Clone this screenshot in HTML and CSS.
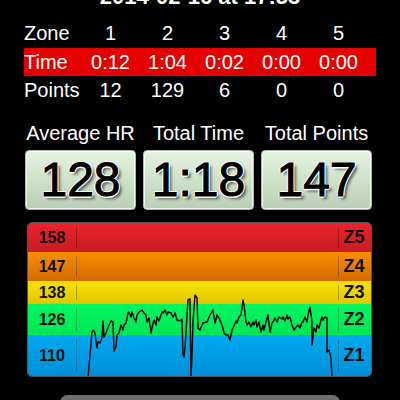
FILE: index.html
```html
<!DOCTYPE html>
<html lang="en">
<head>
    <meta charset="UTF-8">
    <meta name="viewport" content="width=device-width, initial-scale=1.0">
    <title>Workout Summary</title>
    <link rel="stylesheet" href="styles.css">
</head>
<body>
    <div class="screen">
        <div class="title">2014-02-16 at 17:53</div>

        <div class="zones">
            <div class="zone-row">
                <span class="label">Zone</span>
                <span>1</span><span>2</span><span>3</span><span>4</span><span>5</span>
            </div>
            <div class="zone-row time">
                <span class="label">Time</span>
                <span>0:12</span><span>1:04</span><span>0:02</span><span>0:00</span><span>0:00</span>
            </div>
            <div class="zone-row">
                <span class="label">Points</span>
                <span>12</span><span>129</span><span>6</span><span>0</span><span>0</span>
            </div>
        </div>

        <div class="stats">
            <div class="stat">
                <div class="stat-label">Average HR</div>
                <div class="stat-box">128</div>
            </div>
            <div class="stat">
                <div class="stat-label">Total Time</div>
                <div class="stat-box">1:18</div>
            </div>
            <div class="stat">
                <div class="stat-label">Total Points</div>
                <div class="stat-box">147</div>
            </div>
        </div>

        <div class="chart">
            <div class="band z5"><span class="hr">158</span><span class="plot"></span><span class="zn">Z5</span></div>
            <div class="band z4"><span class="hr">147</span><span class="plot"></span><span class="zn">Z4</span></div>
            <div class="band z3"><span class="hr">138</span><span class="plot"></span><span class="zn">Z3</span></div>
            <div class="band z2"><span class="hr">126</span><span class="plot"></span><span class="zn">Z2</span></div>
            <div class="band z1"><span class="hr">110</span><span class="plot"></span><span class="zn">Z1</span></div>
            <svg class="trace" viewBox="27 222 345 155" preserveAspectRatio="none">
                <polyline fill="none" stroke="#000" stroke-width="1.4" stroke-linejoin="round" points="
                    88,378 92,332 93,330 95,333 97,348 98,342 100,343 102,338 103,321 104,337 106,333 107,330
                    109,325 111,321 113,322 114,351 116,347 117,335 119,333 121,325 123,330 124,325 126,323
                    128,313 129,312 131,317 132,312 134,318 136,322 137,315 139,312 142,310 144,313 146,315
                    147,322 149,318 151,333 153,323 154,320 156,325 157,317 159,321 162,312 163,313 165,310
                    167,315 168,312 171,313 173,317 175,313 177,320 179,321 182,319 183,355 184,357 185,348
                    187,315 188,300 190,299 191,378 192,355 193,322 195,295 197,298 198,328 200,330
                    203,323 207,322 210,315 213,310 215,323 217,315 219,318 222,325 224,333 226,335 228,335
                    230,340 232,330 233,328 236,321 237,323 239,317 241,315 243,300 244,305 246,322 247,325
                    249,322 251,327 253,322 254,325 256,320 257,327 259,322 261,332 263,325 264,330 266,322
                    268,315 270,332 272,323 273,322 275,318 277,322 279,317 282,319 283,317 285,321 287,315
                    288,319 290,317 292,325 294,330 296,327 298,325 300,328 302,322 303,322 305,317 307,322
                    308,315 310,307 312,322 312,345 314,328 316,332 317,325 319,328 321,320 322,317 323,320
                    325,317 327,318 327,352 329,350 331,358 332,378"/>
            </svg>
        </div>

        <div class="button"></div>
    </div>
</body>
</html>
```

FILE: styles.css
```css
body {
    margin: 0;
    background-color: #000;
    color: #fff;
    font-family: "Liberation Sans", Arial, sans-serif;
}

.screen {
    width: 400px;
    height: 400px;
    overflow: hidden;
}

.title {
    margin: -15px 0 10px;
    font-size: 22px;
    font-weight: bold;
    line-height: 24px;
    text-align: center;
}

/* zone table */
.zones {
    width: 352px;
    margin-left: 24px;
    font-size: 20px;
}
.zone-row {
    display: grid;
    grid-template-columns: 58px repeat(5, 57px);
    align-items: center;
    height: 29px;
}
.zone-row span {
    text-align: center;
}
.zone-row .label {
    text-align: left;
}
.zone-row.time {
    height: 28px;
    background-color: #e40000;
}

/* totals */
.stats {
    display: grid;
    grid-template-columns: repeat(3, 111px);
    column-gap: 7px;
    margin: 16px 0 0 25px;
}
.stat-label {
    font-size: 20px;
    line-height: 24px;
    text-align: center;
    white-space: nowrap;
    margin-bottom: 5px;
}
.stat-box {
    height: 58px;
    border: 1px solid #b4b4b4;
    border-radius: 4px;
    box-shadow: inset 0 0 0 1px rgba(255, 255, 255, 0.7);
    background: linear-gradient(#e6f3e2, #c9dec5 60%, #b9ceb5);
    color: #000;
    font-size: 48px;
    line-height: 58px;
    text-align: center;
    -webkit-text-stroke: 1px #000;
    text-shadow: 1.5px 0 #fff, -1.5px 0 #fff, 0 1.5px #fff, 0 -1.5px #fff,
                 1px 1px #fff, -1px -1px #fff, 1px -1px #fff, -1px 1px #fff,
                 3px 3px 3px rgba(0, 0, 0, 0.6);
}

/* heart rate chart */
.chart {
    position: relative;
    width: 343px;
    margin: 12px 0 0 27px;
    border: 1px solid #555;
    border-radius: 5px;
    overflow: hidden;
}
.band {
    display: flex;
    align-items: stretch;
    color: #111;
    font-size: 16px;
    font-weight: bold;
}
.band .hr {
    width: 48px;
    display: flex;
    align-items: center;
    justify-content: center;
}
.band .plot {
    flex: 1;
    margin: 4px 0;
    border-left: 1px solid rgba(0, 0, 0, 0.25);
    border-right: 1px solid rgba(0, 0, 0, 0.25);
}
.band .zn {
    width: 30px;
    display: flex;
    align-items: center;
    justify-content: center;
    padding-right: 2px;
    font-size: 18px;
}
.z5 { height: 29px; background: linear-gradient(#ec232d, #c81b24); }
.z4 { height: 29px; background: linear-gradient(#f88e00, #d26b00); }
.z3 { height: 23px; background: linear-gradient(#f8e200, #e0c600); }
.z2 { height: 31px; background: linear-gradient(#00f862, #00e553); }
.z1 { height: 41px; background: linear-gradient(#00a9f0, #008fd8); }

.trace {
    position: absolute;
    left: -1px;
    top: -1px;
    width: 345px;
    height: 155px;
}

.button {
    width: 280px;
    height: 40px;
    margin: 18px 0 0 60px;
    border-radius: 8px;
    background: linear-gradient(#707070, #5a5a5a);
}
```
